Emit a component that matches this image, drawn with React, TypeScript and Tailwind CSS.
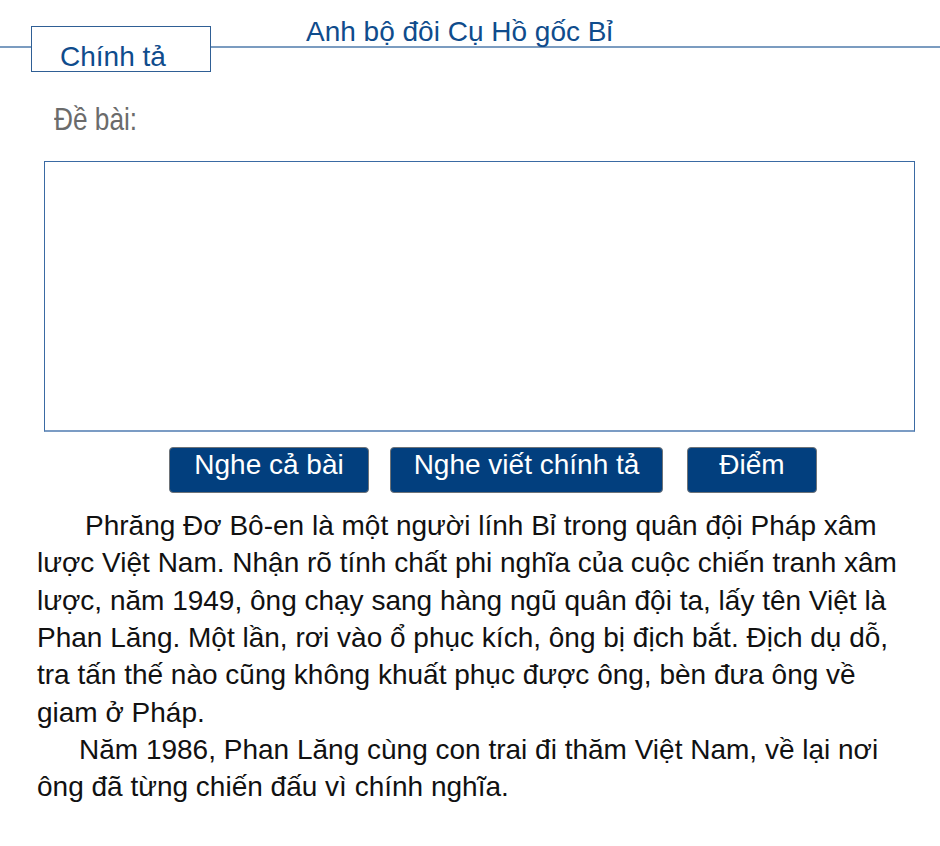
import React from "react";

const buttons = [
  { label: "Nghe cả bài", cls: "ml-[169px] w-[200px]" },
  { label: "Nghe viết chính tả", cls: "ml-[21px] w-[273px]" },
  { label: "Điểm", cls: "ml-[24px] w-[130px]" },
];

export default function App() {
  return (
    <div className="w-[940px] h-[846px] bg-white font-['Liberation_Sans',Arial,sans-serif] overflow-hidden">
      {/* Header with tab and title */}
      <div className="flex items-start h-[72px]">
        <div className="w-[31px] h-[48px] border-b-2 border-[#7b9cc0]" />
        <div className="mt-[26px] w-[180px] h-[46px] border border-[#2f5f95] bg-white pl-[28px] pt-[16px] text-[28px] leading-[28px] text-[#0f4c8c] whitespace-nowrap">
          Chính tả
        </div>
        <div className="flex-1 h-[48px] border-b-2 border-[#7b9cc0] pl-[95px] pt-[18px] text-[28px] leading-[28px] text-[#0f4c8c] whitespace-nowrap">
          Anh bộ đôi Cụ Hồ gốc Bỉ
        </div>
      </div>

      {/* Prompt label (condensed) */}
      <div className="mt-[31px] pl-[54px]">
        <div className="w-fit origin-left scale-x-[0.82] text-[32px] leading-[32px] text-[#6b6b6b] whitespace-nowrap">
          Đề bài:
        </div>
      </div>

      {/* Answer box */}
      <div className="mt-[26px] ml-[44px] w-[871px] h-[271px] border border-[#3a6aa3] border-b-2 border-b-[#7b9cc4]" />

      {/* Actions */}
      <div className="mt-[15px] flex">
        {buttons.map((b) => (
          <button
            key={b.label}
            className={`${b.cls} h-[46px] rounded-[4px] border border-[#6e7378] bg-[#023f7e] text-white text-[28px] leading-[28px] pt-[3px] flex justify-center items-start whitespace-nowrap`}
          >
            {b.label}
          </button>
        ))}
      </div>

      {/* Passage */}
      <div className="mt-[14px] ml-[37px] w-[873px] text-[28px] leading-[1.3333] text-[#111]">
        <p className="indent-[48px]">
          Phrăng Đơ Bô-en là một người lính Bỉ trong quân đội Pháp xâm lược Việt Nam. Nhận rõ tính chất phi nghĩa của cuộc chiến tranh xâm lược, năm 1949, ông chạy sang hàng ngũ quân đội ta, lấy tên Việt là Phan Lăng. Một lần, rơi vào ổ phục kích, ông bị địch bắt. Địch dụ dỗ, tra tấn thế nào cũng không khuất phục được ông, bèn đưa ông về giam ở Pháp.
        </p>
        <p className="indent-[42px]">
          Năm 1986, Phan Lăng cùng con trai đi thăm Việt Nam, về lại nơi ông đã từng chiến đấu vì chính nghĩa.
        </p>
      </div>
    </div>
  );
}
